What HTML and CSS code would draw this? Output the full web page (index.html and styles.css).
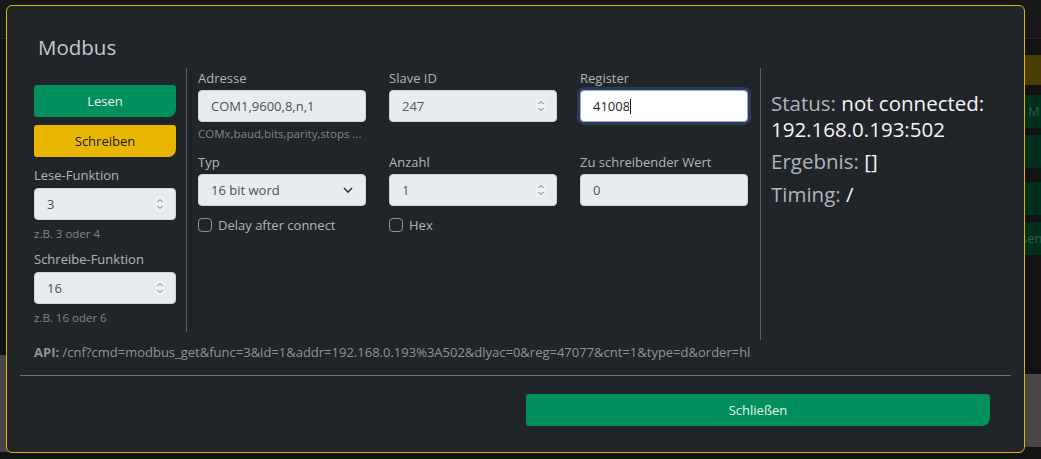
FILE: index.html
```html
<!DOCTYPE html>
<html lang="de">
<head>
    <meta charset="UTF-8">
    <meta name="viewport" content="width=device-width, initial-scale=1.0">
    <title>Modbus</title>
    <link rel="stylesheet" href="styles.css">
</head>
<body>
    <!-- page behind the modal, mostly hidden by the backdrop -->
    <div class="page-behind">
        <div class="pb-topbar"></div>
        <div class="pb-band pb-yellow"></div>
        <div class="pb-band pb-green g1"><span>M</span></div>
        <div class="pb-band pb-green g2"></div>
        <div class="pb-band pb-green g3"></div>
        <div class="pb-band pb-green g4"><span>sen</span></div>
        <div class="pb-gray left"></div>
        <div class="pb-gray right"></div>
    </div>

    <div class="modal">
        <div class="modal-header">
            <h1>Modbus</h1>
        </div>

        <div class="modal-body">
            <div class="col-left">
                <button class="btn btn-green">Lesen</button>
                <button class="btn btn-yellow">Schreiben</button>

                <label class="lbl first">Lese-Funktion</label>
                <div class="field">
                    <input type="text" value="3" readonly>
                    <svg class="spin" viewBox="0 0 10 14" width="10" height="14"><path d="M2.5 5 5 2.5 7.5 5M2.5 9 5 11.5 7.5 9" fill="none" stroke="#6c737a" stroke-width="1"/></svg>
                </div>
                <div class="help">z.B. 3 oder 4</div>

                <label class="lbl">Schreibe-Funktion</label>
                <div class="field">
                    <input type="text" value="16" readonly>
                    <svg class="spin" viewBox="0 0 10 14" width="10" height="14"><path d="M2.5 5 5 2.5 7.5 5M2.5 9 5 11.5 7.5 9" fill="none" stroke="#6c737a" stroke-width="1"/></svg>
                </div>
                <div class="help">z.B. 16 oder 6</div>
            </div>

            <div class="col-mid">
                <div class="grp">
                    <label class="lbl">Adresse</label>
                    <div class="field"><input type="text" value="COM1,9600,8,n,1" readonly></div>
                    <div class="help">COMx,baud,bits,parity,stops ...</div>
                </div>
                <div class="grp">
                    <label class="lbl">Slave ID</label>
                    <div class="field">
                        <input type="text" class="num" value="247" readonly>
                        <svg class="spin" viewBox="0 0 10 14" width="10" height="14"><path d="M2.5 5 5 2.5 7.5 5M2.5 9 5 11.5 7.5 9" fill="none" stroke="#6c737a" stroke-width="1"/></svg>
                    </div>
                </div>
                <div class="grp">
                    <label class="lbl">Register</label>
                    <div class="field focus">
                        <input type="text" value="41008"><span class="caret"></span>
                    </div>
                </div>

                <div class="grp">
                    <label class="lbl">Typ</label>
                    <div class="field">
                        <input type="text" value="16 bit word" readonly>
                        <svg class="chev" viewBox="0 0 12 12" width="12" height="12"><path d="M2 4 6 8 10 4" fill="none" stroke="#343a40" stroke-width="1.6"/></svg>
                    </div>
                    <label class="check"><span class="box"></span>Delay after connect</label>
                </div>
                <div class="grp">
                    <label class="lbl">Anzahl</label>
                    <div class="field">
                        <input type="text" class="num" value="1" readonly>
                        <svg class="spin" viewBox="0 0 10 14" width="10" height="14"><path d="M2.5 5 5 2.5 7.5 5M2.5 9 5 11.5 7.5 9" fill="none" stroke="#6c737a" stroke-width="1"/></svg>
                    </div>
                    <label class="check"><span class="box"></span>Hex</label>
                </div>
                <div class="grp">
                    <label class="lbl">Zu schreibender Wert</label>
                    <div class="field"><input type="text" value="0" readonly></div>
                </div>
            </div>

            <div class="col-right">
                <p><span class="key">Status:</span> <span>not connected:</span> <span>192.168.0.193:502</span></p>
                <p><span class="key">Ergebnis:</span> []</p>
                <p><span class="key">Timing:</span> /</p>
            </div>
        </div>

        <div class="api"><b>API:</b> /cnf?cmd=modbus_get&amp;func=3&amp;id=1&amp;addr=192.168.0.193%3A502&amp;dlyac=0&amp;reg=47077&amp;cnt=1&amp;type=d&amp;order=hl</div>

        <div class="modal-footer">
            <span></span>
            <button class="btn btn-green">Schließen</button>
        </div>
    </div>
</body>
</html>
```

FILE: styles.css
```css
body {
    margin: 0;
    background: #111214;
    font-family: "Open Sans", "Noto Sans", sans-serif;
    overflow: hidden;
    height: 459px;
    position: relative;
}

/* page behind the backdrop */
.page-behind .pb-topbar {
    position: absolute;
    left: 0;
    top: 0;
    width: 100%;
    height: 38px;
    background: #17181a;
    border-bottom: 1px solid #232426;
}
.pb-band {
    position: absolute;
    left: 1025px;
    width: 30px;
    height: 33px;
    font-size: 13px;
    color: #2f5a48;
    line-height: 33px;
}
.pb-band span { padding-left: 3px; }
.pb-band.g4 span { padding-left: 0; margin-left: -4px; }
.pb-yellow { top: 55px; height: 30px; background: #4b3d00; }
.pb-green { background: #002f1d; }
.g1 { top: 95px; }
.g2 { top: 135px; }
.g3 { top: 182px; }
.g4 { top: 222px; }
.pb-gray {
    position: absolute;
    background: #474747;
}
.pb-gray.left { left: 0; top: 355px; width: 8px; height: 97px; }
.pb-gray.right { left: 1025px; top: 374px; width: 20px; height: 73px; }

/* modal */
.modal {
    position: absolute;
    left: 6px;
    top: 5px;
    width: 1019px;
    height: 448px;
    box-sizing: border-box;
    background: #212529;
    border: 1px solid #e2b300;
    border-radius: 6px;
    color: #adb5bd;
}
.modal-header {
    padding: 29px 31px 0;
}
.modal-header h1 {
    margin: 0;
    font-size: 20.5px;
    line-height: 24px;
    font-weight: 400;
    color: #c3c9cf;
}

.modal-body {
    display: flex;
    align-items: flex-start;
    margin-top: 9px;
    padding-left: 27px;
}
.col-left {
    width: 142px;
    padding-top: 17px;
    margin-right: 10px;
}
.col-mid {
    box-sizing: border-box;
    border-left: 1px solid #5b6067;
    padding: 1px 12px 0 11px;
    height: 264px;
    display: grid;
    grid-template-columns: repeat(3, 168px);
    grid-template-rows: 73px auto;
    column-gap: 23px;
    row-gap: 11px;
    align-content: start;
}
.col-right {
    box-sizing: border-box;
    border-left: 1px solid #5b6067;
    height: 272px;
    padding: 22px 0 0 10px;
    font-size: 20.5px;
    line-height: 26px;
    color: #f4f5f6;
}
.col-right p { margin: 0 0 6px; width: 236px; }
.col-right p:last-child { margin-top: 7px; }
.col-right .key { color: #adb5bd; }

.btn {
    display: block;
    width: 100%;
    height: 32px;
    border: none;
    border-radius: 3px 3px 8px 3px;
    font-family: inherit;
    font-size: 13px;
    cursor: pointer;
}
.btn-green { background: #008f5d; color: #e6f2ec; }
.btn-yellow { background: #e8b600; color: #1c1c1c; margin-top: 8px; }

.lbl {
    display: block;
    font-size: 13px;
    line-height: 18px;
    color: #adb5bd;
    margin-top: 8px;
}
.lbl.first { margin-top: 9px; }
.grp .lbl { margin-top: 0; }

.field {
    display: flex;
    align-items: center;
    height: 32px;
    margin-top: 4px;
    padding: 0 12px;
    box-sizing: border-box;
    background: #e9ecef;
    border: 1px solid #ced4da;
    border-radius: 4px;
}
.grp .field { margin-top: 3px; }
.field input {
    flex: 1;
    min-width: 0;
    border: none;
    background: transparent;
    outline: none;
    padding: 0;
    font-family: inherit;
    font-size: 13px;
    color: #495057;
}
.field input.num { color: #4f5b69; }
.field.focus {
    background: #fff;
    border-color: #8faedc;
    box-shadow: 0 0 0 3px #2c3a52;
}
.field.focus input { flex: 0 0 auto; width: 36px; color: #212529; }
.caret {
    width: 1px;
    height: 15px;
    background: #111;
    margin-left: 1px;
}
.spin {
    background: #eef0f2;
    margin-right: -2px;
}
.chev { margin-right: -1px; }

.help {
    font-size: 11.5px;
    line-height: 16px;
    color: #7e868e;
    margin-top: 6px;
    white-space: nowrap;
}
.grp .help { margin-top: 4px; }

.check {
    display: flex;
    align-items: center;
    margin-top: 11px;
    font-size: 13px;
    line-height: 16px;
    color: #adb5bd;
}
.check .box {
    width: 12px;
    height: 12px;
    border: 1px solid #8b9299;
    border-radius: 4px;
    margin-right: 6px;
}

.api {
    margin: 3px 0 0 27px;
    font-size: 13px;
    line-height: 18px;
    color: #8d949b;
}
.api b { font-weight: 700; }

.modal-footer {
    display: grid;
    grid-template-columns: 506px 1fr;
    margin: 14px 13px 0;
    padding: 18px 21px 0 0;
    border-top: 1px solid #6c7278;
}
```
